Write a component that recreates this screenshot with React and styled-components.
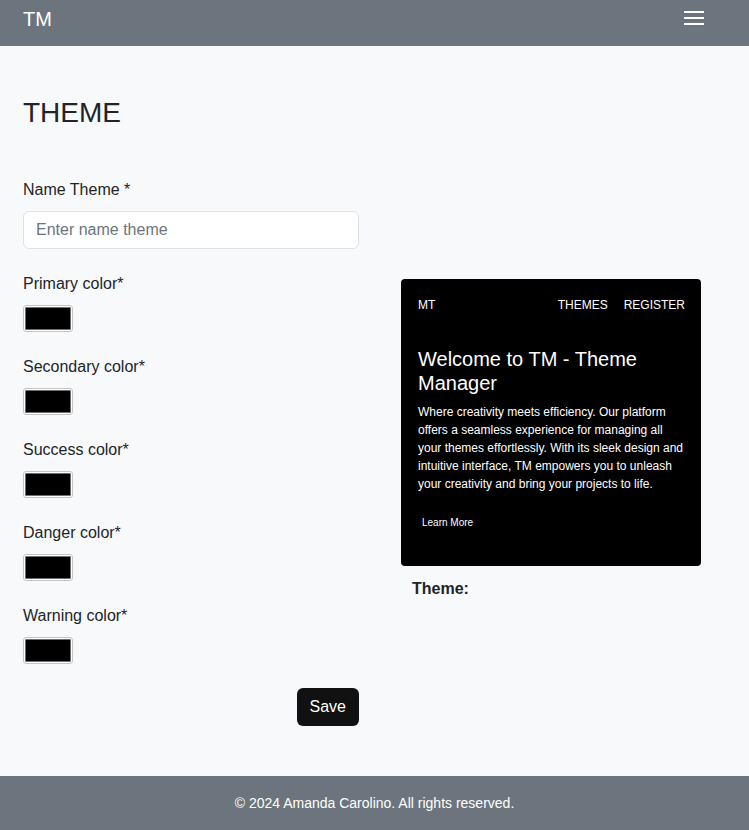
import React from 'react'
import styled, { createGlobalStyle } from 'styled-components'

const GlobalStyle = createGlobalStyle`
  * { box-sizing: border-box; }
  body {
    margin: 0;
    font-family: "Liberation Sans", Arial, sans-serif;
    font-size: 16px;
    line-height: 1.5;
    color: #212529;
    background: #f8f9fa;
  }
`

const Page = styled.div`
  min-height: 830px;
  display: flex;
  flex-direction: column;
`

const Navbar = styled.nav`
  height: 46px;
  background: #6c757d;
  display: flex;
  align-items: center;
  justify-content: space-between;
  padding: 0 23px;
`

const Brand = styled.span`
  color: #fff;
  font-size: 20px;
  line-height: 1;
  margin-top: -8px;
`

const Burger = styled.button`
  border: 0;
  background: none;
  padding: 0;
  margin: -10px 22px 0 0;
  width: 20px;
  height: 14px;
  display: flex;
  flex-direction: column;
  justify-content: space-between;
  cursor: pointer;

  span {
    display: block;
    height: 2px;
    background: #fff;
  }
`

const Main = styled.main`
  flex: 1;
  padding: 50px 23px 50px;
`

const Title = styled.h2`
  margin: 0 0 48px;
  font-size: 28px;
  font-weight: 400;
  line-height: 1.2;
`

const Field = styled.div`
  width: 336px;
  display: flex;
  flex-direction: column;
  gap: 9px;
  margin-bottom: ${p => p.$last ? '0' : '23px'};
`

const Label = styled.label`
  font-size: 16px;
  line-height: 24px;
`

const TextInput = styled.input`
  width: 100%;
  height: 38px;
  padding: 6px 12px;
  font: inherit;
  color: #212529;
  background: #fff;
  border: 1px solid #dee2e6;
  border-radius: 6px;

  &::placeholder {
    color: #6c757d;
  }
`

const Row = styled.div`
  display: grid;
  grid-template-columns: 336px 300px;
  column-gap: 42px;
  margin-top: 23px;
  align-items: start;
`

const FormColumn = styled.div`
  display: flex;
  flex-direction: column;
`

const ColorInput = styled.input`
  appearance: none;
  -webkit-appearance: none;
  width: 50px;
  height: 27px;
  padding: 1px;
  border: 1px solid #c4c4c4;
  border-radius: 3px;
  background: #fff;
  cursor: pointer;

  &::-webkit-color-swatch-wrapper {
    padding: 0;
  }

  &::-webkit-color-swatch {
    border: 1px solid #6e6e6e;
    border-radius: 1px;
  }
`

const Actions = styled.div`
  display: flex;
  justify-content: flex-end;
  margin-top: 1px;
`

const SaveButton = styled.button`
  height: 38px;
  padding: 0 13px;
  border: 0;
  border-radius: 6px;
  background: #111;
  color: #fff;
  font: inherit;
  font-size: 16px;
`

const PreviewColumn = styled.div`
  padding-top: 7px;
`

const Card = styled.div`
  background: #000;
  color: #fff;
  border-radius: 4px;
  padding: 17px 16px 34px 17px;
  height: 287px;
`

const MiniNav = styled.div`
  display: flex;
  justify-content: space-between;
  font-size: 12px;
  line-height: 18px;
`

const MiniLinks = styled.div`
  display: flex;
  gap: 16px;
`

const Welcome = styled.h3`
  margin: 33px 0 8px;
  font-size: 20px;
  font-weight: 400;
  line-height: 24px;
`

const Blurb = styled.p`
  margin: 0;
  font-size: 12px;
  line-height: 18px;
`

const LearnMore = styled.a`
  display: inline-block;
  margin: 22px 0 0 4px;
  font-size: 10px;
  color: #fff;
  text-decoration: none;
`

const ThemeLabel = styled.div`
  margin: 11px 0 0 11px;
  font-weight: 700;
  font-size: 16px;
`

const Footer = styled.footer`
  height: 54px;
  background: #6c757d;
  color: #fff;
  font-size: 14px;
  display: flex;
  align-items: center;
  justify-content: center;
`

const colors = ['Primary', 'Secondary', 'Success', 'Danger', 'Warning']

export default function App() {
  return (
    <Page>
      <GlobalStyle />
      <Navbar>
        <Brand>TM</Brand>
        <Burger aria-label="menu">
          <span />
          <span />
          <span />
        </Burger>
      </Navbar>

      <Main>
        <Title>THEME</Title>
        <Field $last>
          <Label htmlFor="name">Name Theme *</Label>
          <TextInput id="name" placeholder="Enter name theme" />
        </Field>

        <Row>
          <FormColumn>
            {colors.map(c => (
              <Field key={c}>
                <Label htmlFor={c}>{c} color*</Label>
                <ColorInput id={c} type="color" defaultValue="#000000" />
              </Field>
            ))}
            <Actions>
              <SaveButton>Save</SaveButton>
            </Actions>
          </FormColumn>

          <PreviewColumn>
            <Card>
              <MiniNav>
                <span>MT</span>
                <MiniLinks>
                  <span>THEMES</span>
                  <span>REGISTER</span>
                </MiniLinks>
              </MiniNav>
              <Welcome>Welcome to TM - Theme Manager</Welcome>
              <Blurb>
                Where creativity meets efficiency. Our platform offers a seamless
                experience for managing all your themes effortlessly. With its sleek
                design and intuitive interface, TM empowers you to unleash your
                creativity and bring your projects to life.
              </Blurb>
              <LearnMore href="#">Learn More</LearnMore>
            </Card>
            <ThemeLabel>Theme:</ThemeLabel>
          </PreviewColumn>
        </Row>
      </Main>

      <Footer>© 2024 Amanda Carolino. All rights reserved.</Footer>
    </Page>
  )
}
